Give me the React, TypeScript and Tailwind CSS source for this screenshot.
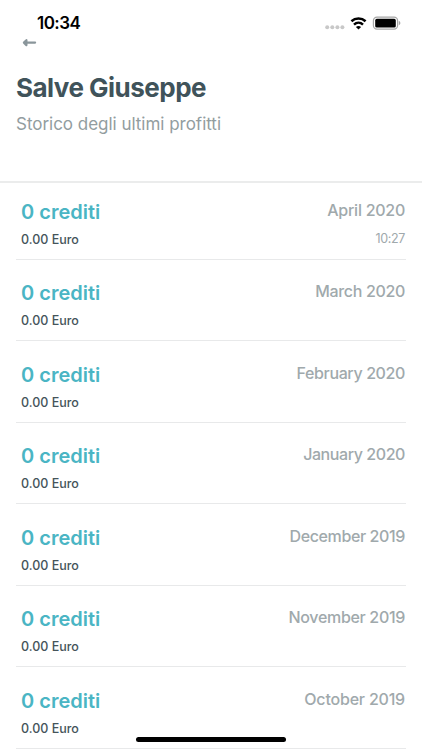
import { clsx } from 'clsx';

type Profit = {
  month: string;
  time?: string;
  monthClass: string;
};

const profits: Profit[] = [
  { month: 'April 2020', time: '10:27', monthClass: 'tracking-[-0.26px]' },
  { month: 'March 2020', monthClass: 'tracking-[-0.33px]' },
  { month: 'February 2020', monthClass: 'tracking-[-0.38px]' },
  { month: 'January 2020', monthClass: 'tracking-[-0.42px]' },
  { month: 'December 2019', monthClass: 'tracking-[-0.38px]' },
  { month: 'November 2019', monthClass: 'tracking-[-0.32px]' },
  { month: 'October 2019', monthClass: 'tracking-[-0.2px]' },
];

function StatusBar() {
  return (
    <div className="flex h-9 justify-between pl-[37px] pr-[21px]">
      <span className="pt-[13px] text-[17px] leading-5 font-semibold tracking-[-0.55px] text-black">10:34</span>
      <svg className="mt-4 h-4 w-[76px]" viewBox="0 0 76 16" fill="none">
        <g fill="#c8c8c8">
          <circle cx="2.2" cy="11.2" r="2" />
          <circle cx="7.3" cy="11.2" r="2" />
          <circle cx="12.4" cy="11.2" r="2" />
          <circle cx="17.4" cy="11.2" r="2" />
        </g>
        <g stroke="#000" strokeWidth="2.5">
          <path d="M26.4 5.2a10.6 10.6 0 0 1 14.2 0" />
          <path d="M29 8.6a6.7 6.7 0 0 1 9 0" />
        </g>
        <path d="M30.9 11a4 4 0 0 1 5.2 0l-2.6 2.4z" fill="#000" />
        <rect x="48.4" y="1.1" width="24.2" height="12" rx="3.6" stroke="#a6a6a6" strokeWidth="1.2" />
        <rect x="50.2" y="2.8" width="20.6" height="8.7" rx="1.6" fill="#000" />
        <path d="M73.8 5.1c2.1.7 2.1 3.5 0 4.2z" fill="#a6a6a6" />
      </svg>
    </div>
  );
}

function ProfitRow({ month, time, monthClass }: Profit) {
  return (
    <li className="flex h-[81.5px] justify-between border-b border-[#e8e9ea] pt-[21.5px] pr-px pl-[5px]">
      <div>
        <p className="text-[20px] leading-6 font-semibold text-[#4ab5c4]">0 crediti</p>
        <p className="mt-2 text-[12.5px] leading-4 font-medium text-[#45545a]">0.00 Euro</p>
      </div>
      <div className="text-right text-[#a0a9ac]">
        <p className={clsx('text-[16px] leading-5 font-medium', monthClass)}>{month}</p>
        {time && <p className="mt-[11px] text-[12.5px] leading-4 tracking-[-0.35px]">{time}</p>}
      </div>
    </li>
  );
}

export default function App() {
  return (
    <main className="relative h-[750px] w-[422px] overflow-hidden bg-white font-['Inter',sans-serif]">
      <header className="h-[183px] border-b-2 border-[#ebecec]">
        <StatusBar />
        <button type="button" aria-label="Indietro" className="ml-[22px] block h-[14px]">
          <svg className="h-[14px] w-[15px]" viewBox="0 0 15 14" fill="none" stroke="#8a969b" strokeWidth="2.2" strokeLinecap="round" strokeLinejoin="round">
            <path d="M3 6.6h10.1" />
            <path d="M4.4 4.2 1.9 6.6l2.5 2.5z" fill="#8a969b" />
          </svg>
        </button>
        <h1 className="mt-[22px] ml-4 text-[26px] leading-8 font-bold text-[#40535a]">
          <span className="tracking-[-0.52px]">Salve Giuseppe</span>
        </h1>
        <p className="mt-2 ml-4 text-[17px] leading-6 tracking-[-0.02px] text-[#929da0]">Storico degli ultimi profitti</p>
      </header>
      <ul className="-mt-[5px] mr-4 ml-4">
        {profits.map((profit) => (
          <ProfitRow key={profit.month} {...profit} />
        ))}
      </ul>
      <div className="absolute bottom-2 left-[136px] h-[5px] w-[150px] rounded-full bg-black" />
    </main>
  );
}
